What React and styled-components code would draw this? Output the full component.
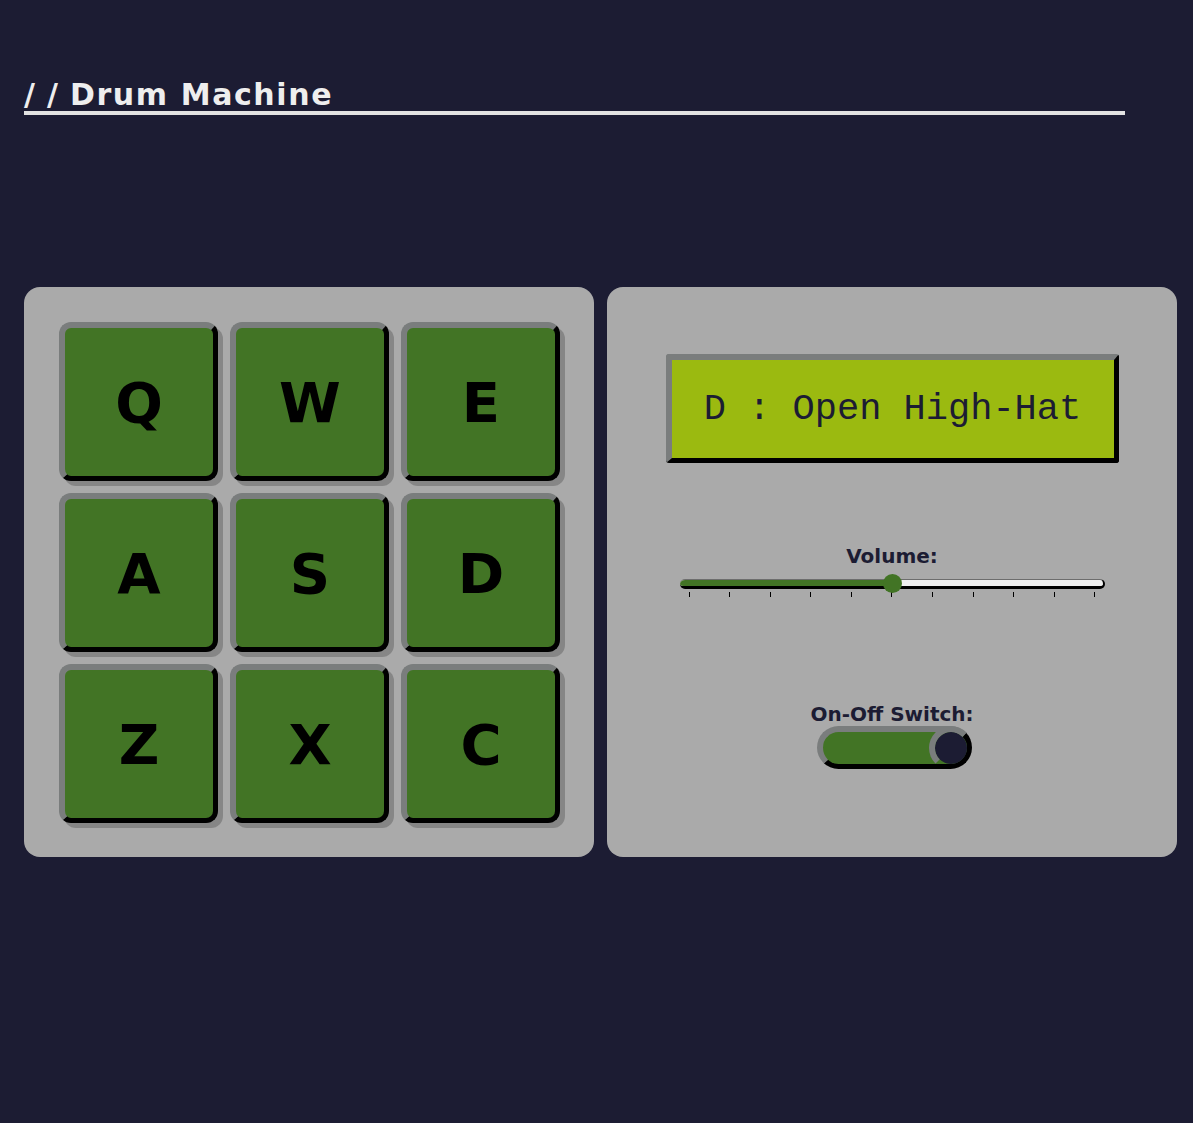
import React, { useState } from 'react'
import styled, { createGlobalStyle } from 'styled-components'

const GlobalStyle = createGlobalStyle`
  body {
    margin: 0;
    background: #1c1c33;
    font-family: 'DejaVu Sans', Verdana, sans-serif;
  }
`

const pads = [
  { key: 'Q', name: 'Heater 1' },
  { key: 'W', name: 'Heater 2' },
  { key: 'E', name: 'Heater 3' },
  { key: 'A', name: 'Heater 4' },
  { key: 'S', name: 'Clap' },
  { key: 'D', name: 'Open High-Hat' },
  { key: 'Z', name: "Kick n' Hat" },
  { key: 'X', name: 'Kick' },
  { key: 'C', name: 'Closed High-Hat' },
]

export default function App() {
  const [display, setDisplay] = useState('D : Open High-Hat')
  const [volume] = useState(0.5)
  const [power, setPower] = useState(true)

  return (
    <Page>
      <GlobalStyle />
      <Title>
        <Slashes>//</Slashes>Drum Machine
      </Title>
      <Machine>
        <Panel>
          <PadGrid>
            {pads.map(p => (
              <Pad key={p.key} onClick={() => setDisplay(`${p.key} : ${p.name}`)}>
                {p.key}
              </Pad>
            ))}
          </PadGrid>
        </Panel>
        <Controls>
          <Display>{display}</Display>
          <Label $top={82}>Volume:</Label>
          <Slider>
            <Track>
              <Fill style={{ width: `${volume * 100}%` }} />
            </Track>
            <Thumb style={{ left: `${volume * 100}%` }} />
            <Ticks>
              {Array.from({ length: 11 }).map((_, i) => (
                <Tick key={i} />
              ))}
            </Ticks>
          </Slider>
          <Label $top={106}>On-Off Switch:</Label>
          <Switch $on={power} onClick={() => setPower(s => !s)}>
            <Knob $on={power} />
          </Switch>
        </Controls>
      </Machine>
    </Page>
  )
}

const Page = styled.div`
  padding: 0 0 0 24px;
`

const Title = styled.h1`
  margin: 78px 0 0;
  width: 1101px;
  font-size: 30px;
  line-height: 33px;
  font-weight: bold;
  letter-spacing: 1.6px;
  color: #eeeeee;
  border-bottom: 4px solid #e2e2e2;
`

const Slashes = styled.span`
  letter-spacing: 12px;
`

const Machine = styled.div`
  display: flex;
  gap: 13px;
  margin-top: 172px;
`

const Panel = styled.div`
  width: 570px;
  height: 570px;
  box-sizing: border-box;
  background: #aaaaaa;
  border-radius: 16px;
  padding: 35px;
`

const PadGrid = styled.div`
  display: grid;
  grid-template-columns: repeat(3, 159px);
  grid-auto-rows: 159px;
  gap: 12px;
`

const Pad = styled.button`
  box-sizing: border-box;
  display: flex;
  align-items: center;
  justify-content: center;
  background: #427425;
  border-style: solid;
  border-width: 6px 5px 5px 6px;
  border-color: #7a7d7d #000 #000 #7a7d7d;
  border-radius: 12px;
  box-shadow: 5px 5px 0 #868686;
  font-family: 'DejaVu Sans', Verdana, sans-serif;
  font-weight: bold;
  font-size: 56px;
  color: #000;
  cursor: pointer;
  padding: 0;
`

const Controls = styled(Panel)`
  display: flex;
  flex-direction: column;
  align-items: center;
  padding: 67px 0 0;
`

const Display = styled.div`
  box-sizing: border-box;
  width: 453px;
  height: 109px;
  display: flex;
  align-items: center;
  justify-content: center;
  background: #9bba10;
  border-style: solid;
  border-width: 6px 5px 5px 6px;
  border-color: #7a7d7d #000 #000 #7a7d7d;
  border-radius: 3px;
  font-family: 'Liberation Mono', 'Courier New', monospace;
  font-size: 37px;
  color: #1c1c33;
  white-space: pre;
`

const Label = styled.div`
  margin-top: ${({ $top }) => $top}px;
  font-family: 'DejaVu Sans', Verdana, sans-serif;
  font-weight: bold;
  font-size: 20px;
  line-height: 22px;
  color: #1c1c33;
`

const Slider = styled.div`
  position: relative;
  width: 425px;
  margin-top: 12px;
`

const Track = styled.div`
  box-sizing: border-box;
  height: 10px;
  background: #f0f0f0;
  border-top: 1px solid #6d6d6d;
  border-bottom: 3px solid #000;
  border-right: 2px solid #000;
  border-radius: 5px;
  overflow: hidden;
`

const Fill = styled.div`
  height: 100%;
  background: #427425;
`

const Thumb = styled.div`
  position: absolute;
  top: -5px;
  width: 19px;
  height: 19px;
  margin-left: -9px;
  border-radius: 50%;
  background: #427425;
`

const Ticks = styled.div`
  display: flex;
  justify-content: space-between;
  padding: 0 9px;
  margin-top: 3px;
  height: 5px;
`

const Tick = styled.span`
  width: 1px;
  height: 5px;
  background: #000;
`

const Switch = styled.div`
  position: relative;
  box-sizing: border-box;
  width: 155px;
  height: 43px;
  margin: 1px 0 0 4px;
  border-style: solid;
  border-width: 6px 5px 5px 6px;
  border-color: #7a7d7d #000 #000 #7a7d7d;
  border-radius: 22px;
  background: ${({ $on }) => ($on ? '#427425' : '#1c1c33')};
  cursor: pointer;
`

const Knob = styled.div`
  position: absolute;
  top: -6px;
  ${({ $on }) => ($on ? 'right: -6px;' : 'left: -6px;')}
  width: 44px;
  height: 44px;
  box-sizing: border-box;
  border-radius: 50%;
  border: 6px solid;
  border-color: #7a7d7d transparent transparent #7a7d7d;
  background: #1c1c33;
  background-clip: padding-box;
`
